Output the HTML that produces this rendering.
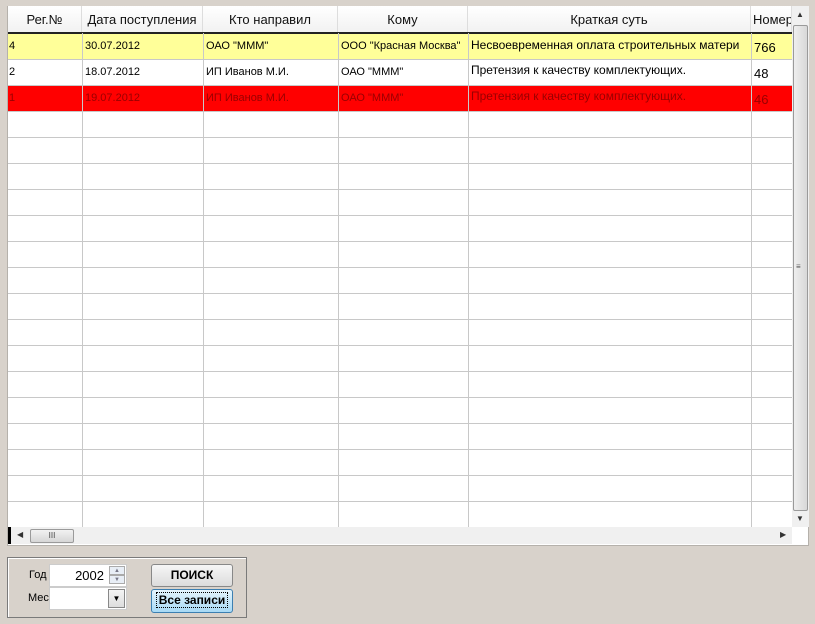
<!DOCTYPE html>
<html><head><meta charset="utf-8"><style>
*{margin:0;padding:0;box-sizing:border-box}
body{width:815px;height:624px;background:#d8d2cb;font-family:"Liberation Sans",sans-serif;position:relative;overflow:hidden}
.a{position:absolute}
.grid{left:7px;top:6px;width:802px;height:540px;background:#fff;border:1px solid #b5b1ab}
.hd{position:absolute;top:6px;height:27px;font-size:13px;color:#111;text-align:center;line-height:27px;background:linear-gradient(#fff,#f1f1f1);border-right:1px solid #ddd;overflow:hidden;white-space:nowrap}
.vl{position:absolute;top:33px;height:494px;width:1px;background:#c8c8c8}
.hl{position:absolute;left:8px;width:784px;height:1px;background:#c8c8c8}
.row{position:absolute;left:8px;width:784px;height:26px}
.c{position:absolute;font-size:11px;white-space:nowrap;overflow:hidden}
</style></head><body>
<div class="a grid"></div>
<div class="hd" style="left:8px;width:74px">Рег.№</div>
<div class="hd" style="left:82px;width:121px">Дата поступления</div>
<div class="hd" style="left:203px;width:135px">Кто направил</div>
<div class="hd" style="left:338px;width:130px">Кому</div>
<div class="hd" style="left:468px;width:283px">Краткая суть</div>
<div class="hd" style="left:751px;width:41px;text-align:left;padding-left:2px">Номер</div>
<div class="a" style="left:8px;top:32px;width:784px;height:2px;background:#222"></div>
<div class="row" style="top:34px;background:#ffff99"></div>
<div class="row" style="top:86px;background:#ff0000"></div>
<div class="hl" style="top:59px"></div><div class="hl" style="top:85px"></div><div class="hl" style="top:111px"></div>
<div class="hl" style="top:137px"></div><div class="hl" style="top:163px"></div><div class="hl" style="top:189px"></div>
<div class="hl" style="top:215px"></div><div class="hl" style="top:241px"></div><div class="hl" style="top:267px"></div>
<div class="hl" style="top:293px"></div><div class="hl" style="top:319px"></div><div class="hl" style="top:345px"></div>
<div class="hl" style="top:371px"></div><div class="hl" style="top:397px"></div><div class="hl" style="top:423px"></div>
<div class="hl" style="top:449px"></div><div class="hl" style="top:475px"></div><div class="hl" style="top:501px"></div>
<div class="vl" style="left:82px"></div><div class="vl" style="left:203px"></div><div class="vl" style="left:338px"></div>
<div class="vl" style="left:468px"></div><div class="vl" style="left:751px"></div>

<div class="c" style="left:9px;top:40px">4</div>
<div class="c" style="left:85px;top:40px">30.07.2012</div>
<div class="c" style="left:206px;top:40px">ОАО "МММ"</div>
<div class="c" style="left:341px;top:40px">ООО "Красная Москва"</div>
<div class="c" style="left:471px;top:38px;font-size:12px;width:278px">Несвоевременная оплата строительных матери</div>
<div class="c" style="left:754px;top:40px;font-size:13px">766</div>

<div class="c" style="left:9px;top:66px">2</div>
<div class="c" style="left:85px;top:66px">18.07.2012</div>
<div class="c" style="left:206px;top:66px">ИП Иванов М.И.</div>
<div class="c" style="left:341px;top:66px">ОАО "МММ"</div>
<div class="c" style="left:471px;top:63px;font-size:12px">Претензия к качеству комплектующих.</div>
<div class="c" style="left:754px;top:66px;font-size:13px">48</div>

<div class="c" style="left:9px;top:92px;color:#900">1</div>
<div class="c" style="left:85px;top:92px;color:#900">19.07.2012</div>
<div class="c" style="left:206px;top:92px;color:#900">ИП Иванов М.И.</div>
<div class="c" style="left:341px;top:92px;color:#900">ОАО "МММ"</div>
<div class="c" style="left:471px;top:89px;font-size:12px;color:#900">Претензия к качеству комплектующих.</div>
<div class="c" style="left:754px;top:92px;font-size:13px;color:#900">46</div>

<!-- vertical scrollbar -->
<div class="a" style="left:792px;top:6px;width:17px;height:521px;background:#f0f0f0"></div>
<div class="a" style="left:796px;top:10px;font-size:8px;color:#333">▲</div>
<div class="a" style="left:793px;top:25px;width:15px;height:486px;border:1px solid #9a9a9a;border-radius:2px;background:linear-gradient(90deg,#eee,#d8d8d8)"></div>
<div class="a" style="left:796px;top:262px;font-size:8px;color:#555">≡</div>
<div class="a" style="left:796px;top:514px;font-size:8px;color:#333">▼</div>
<!-- horizontal scrollbar -->
<div class="a" style="left:8px;top:527px;width:784px;height:17px;background:#f0f0f0"></div>
<div class="a" style="left:8px;top:527px;width:3px;height:17px;background:#000"></div>
<div class="a" style="left:17px;top:530px;font-size:8px;color:#333">◀</div>
<div class="a" style="left:30px;top:529px;width:44px;height:14px;border:1px solid #9a9a9a;border-radius:2px;background:linear-gradient(#f2f2f2,#d6d6d6);font-size:8px;text-align:center;line-height:12px;color:#444">III</div>
<div class="a" style="left:780px;top:530px;font-size:8px;color:#333">▶</div>

<!-- bottom panel -->
<div class="a" style="left:7px;top:557px;width:240px;height:61px;border:1px solid #7a7a7a;box-shadow:inset 1px 1px 0 #fff"></div>
<div class="a" style="left:29px;top:569px;font-size:11px">Год</div>
<div class="a" style="left:28px;top:592px;font-size:11px">Мес</div>
<div class="a" style="left:49px;top:564px;width:78px;height:23px;background:#fff;border:1px solid #ccc;font-size:13px;line-height:21px;text-align:right;padding-right:22px">2002</div>
<div class="a" style="left:109px;top:566px;width:16px;height:9px;border:1px solid #aaa;background:#e8eef6;font-size:6px;text-align:center;line-height:8px;color:#778">▲</div>
<div class="a" style="left:109px;top:575px;width:16px;height:9px;border:1px solid #aaa;background:#e8eef6;font-size:6px;text-align:center;line-height:8px;color:#778">▼</div>
<div class="a" style="left:49px;top:587px;width:78px;height:23px;background:#fff;border:1px solid #ccc"></div>
<div class="a" style="left:108px;top:589px;width:17px;height:19px;border:1px solid #888;background:linear-gradient(#f4f4f4,#ddd);font-size:8px;text-align:center;line-height:18px">▼</div>
<div class="a" style="left:151px;top:564px;width:82px;height:23px;border:1px solid #888;border-radius:3px;background:linear-gradient(#f6f6f6,#dcdcdc);font-size:12px;font-weight:bold;text-align:center;line-height:21px">ПОИСК</div>
<div class="a" style="left:151px;top:589px;width:82px;height:24px;border:1px solid #3c7fb1;border-radius:3px;background:linear-gradient(#e5f4fc,#a7d9f5);font-size:12px;font-weight:bold;text-align:center;line-height:20px"><span style="outline:1px dotted #000;padding:0 2px">Все записи</span></div>
</body></html>
